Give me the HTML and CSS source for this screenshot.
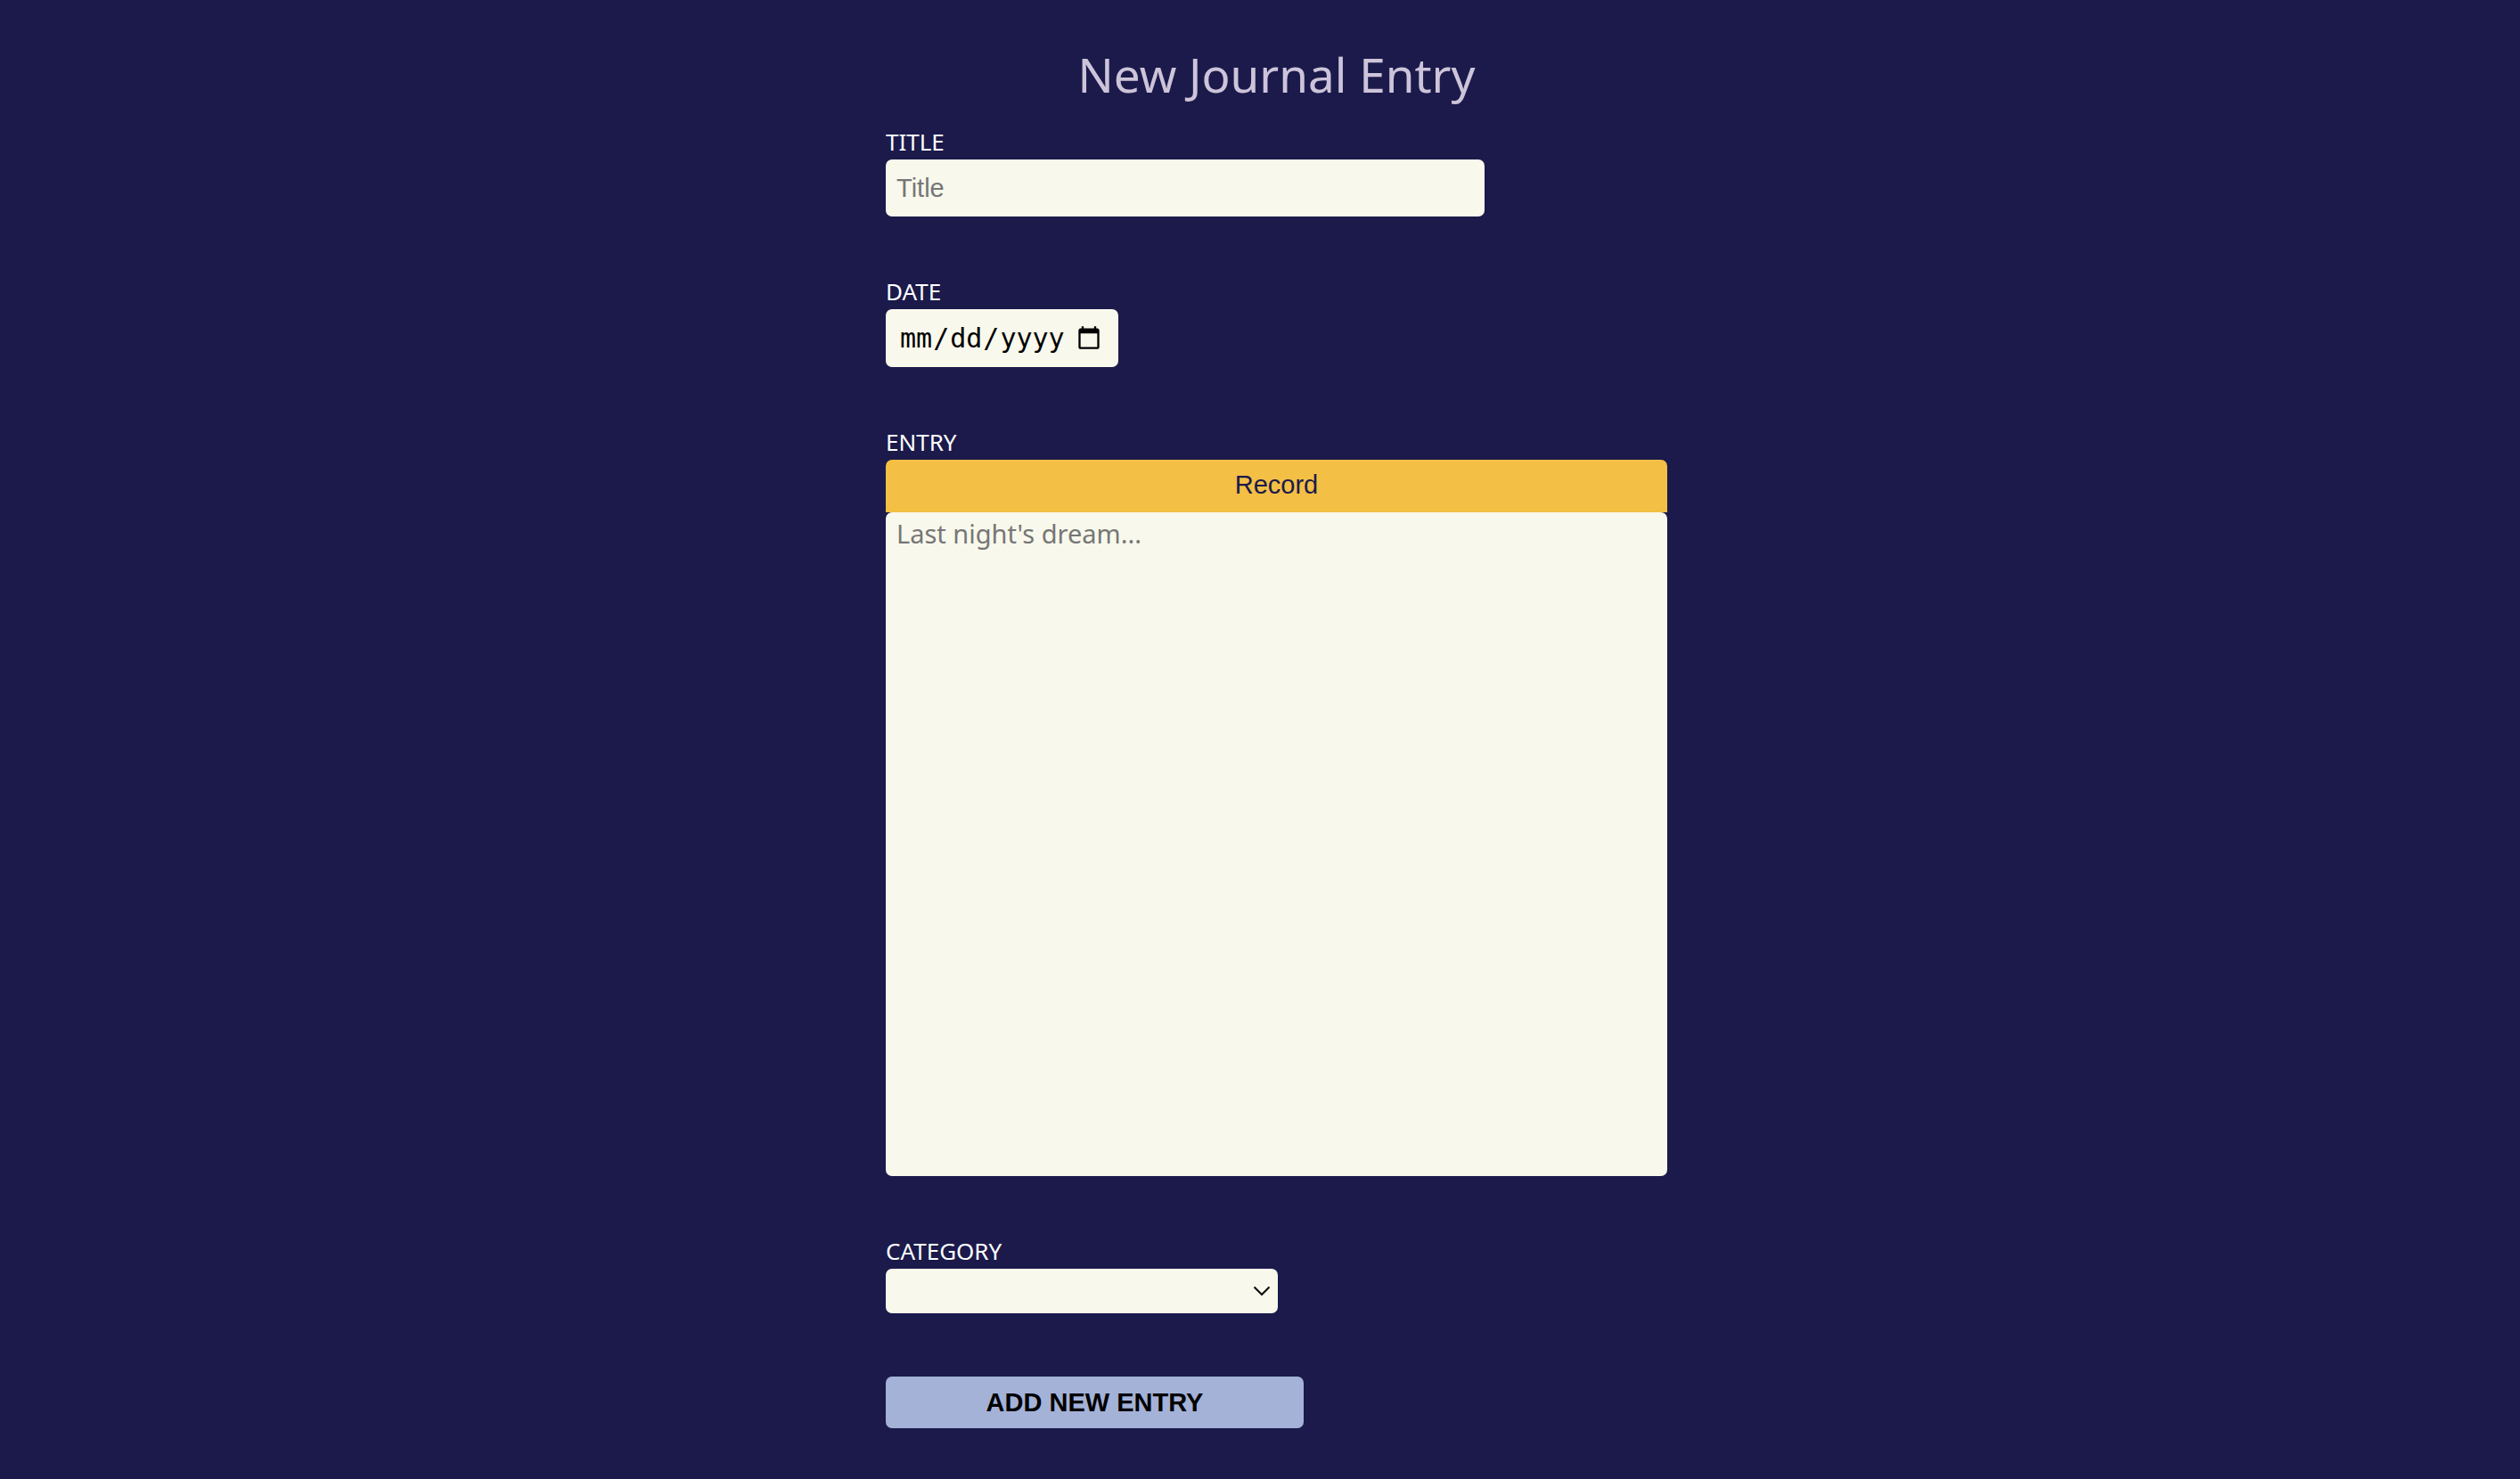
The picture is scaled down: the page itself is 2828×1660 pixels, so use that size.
FILE: index.html
```html
<!DOCTYPE html>
<html lang="en">
<head>
<meta charset="utf-8">
<title>New Journal Entry</title>
<link rel="stylesheet" href="styles.css">
</head>
<body>
<main class="page">
  <h1 class="heading">New Journal Entry</h1>
  <form class="form">
    <div class="field">
      <label class="label" for="title">TITLE</label>
      <input class="text-input" id="title" type="text" placeholder="Title">
    </div>
    <div class="field">
      <label class="label" for="date">DATE</label>
      <input class="date-input" id="date" type="date">
    </div>
    <div class="field field-wide">
      <label class="label" for="entry">ENTRY</label>
      <button class="record" type="button">Record</button>
      <textarea class="entry" id="entry" placeholder="Last night's dream..."></textarea>
    </div>
    <div class="field">
      <label class="label" for="category">CATEGORY</label>
      <div class="select-wrap">
        <select class="select" id="category"><option value=""></option></select>
        <svg class="chevron" width="20" height="12" viewBox="0 0 20 12"><path d="M1.5 1.5 L10 10 L18.5 1.5" fill="none" stroke="#111" stroke-width="2.2"/></svg>
      </div>
    </div>
    <button class="submit" type="submit">ADD NEW ENTRY</button>
  </form>
</main>
</body>
</html>
```
FILE: styles.css
```css
html, body {
  margin: 0;
  padding: 0;
}
body {
  background: #1b1a4b;
  font-family: "Noto Sans", "Open Sans", sans-serif;
  min-height: 1660px;
}
.page {
  width: 877px;
  margin-left: 994px;
  padding-top: 48px;
}
.heading {
  margin: 0;
  font-size: 53px;
  line-height: 72px;
  font-weight: 400;
  color: #cdc4da;
  text-align: center;
}
.form {
  display: flex;
  flex-direction: column;
  align-items: flex-start;
  gap: 67px;
  margin-top: 22px;
}
.field {
  display: flex;
  flex-direction: column;
  align-items: flex-start;
}
.field-wide {
  align-self: stretch;
}
.label {
  font-size: 26px;
  line-height: 34px;
  color: #ffffff;
  margin-bottom: 3px;
}
.text-input {
  box-sizing: border-box;
  width: 672px;
  height: 64px;
  border: none;
  border-radius: 7px;
  background: #f8f8ec;
  padding: 0 12px;
  font-family: "Liberation Sans", Arial, sans-serif;
  font-size: 29px;
  color: #111;
  outline: none;
}
.text-input::placeholder {
  color: #767676;
}
.date-input {
  box-sizing: border-box;
  width: 261px;
  height: 65px;
  border: none;
  border-radius: 7px;
  background: #f8f8ec;
  padding: 0 16px 0 15px;
  font-family: "DejaVu Sans Mono", monospace;
  font-size: 30px;
  color: #000;
  outline: none;
}
.record {
  box-sizing: border-box;
  width: 100%;
  height: 59px;
  border: none;
  border-radius: 7px 7px 0 0;
  background: #f3bf44;
  color: #1b1a4b;
  font-family: "Liberation Sans", Arial, sans-serif;
  font-size: 29px;
  padding: 0 0 2px;
  cursor: pointer;
}
.entry {
  box-sizing: border-box;
  display: block;
  width: 100%;
  height: 745px;
  border: none;
  border-radius: 7px;
  background: #f8f8ec;
  padding: 4px 12px;
  font-family: "Noto Sans", "Open Sans", sans-serif;
  font-size: 29px;
  resize: none;
  outline: none;
}
.entry::placeholder {
  color: #767676;
}
.select-wrap {
  position: relative;
  width: 440px;
  height: 50px;
}
.select {
  appearance: none;
  -webkit-appearance: none;
  box-sizing: border-box;
  width: 440px;
  height: 50px;
  border: none;
  border-radius: 7px;
  background: #f8f8ec;
  font-size: 26px;
  outline: none;
}
.chevron {
  position: absolute;
  left: 412px;
  top: 19px;
  pointer-events: none;
}
.submit {
  box-sizing: border-box;
  width: 469px;
  height: 58px;
  margin-top: 4px;
  border: none;
  border-radius: 7px;
  background: #a4b2d8;
  color: #000;
  font-family: "Liberation Sans", Arial, sans-serif;
  font-weight: 700;
  font-size: 29px;
  padding: 0;
  cursor: pointer;
}
```
